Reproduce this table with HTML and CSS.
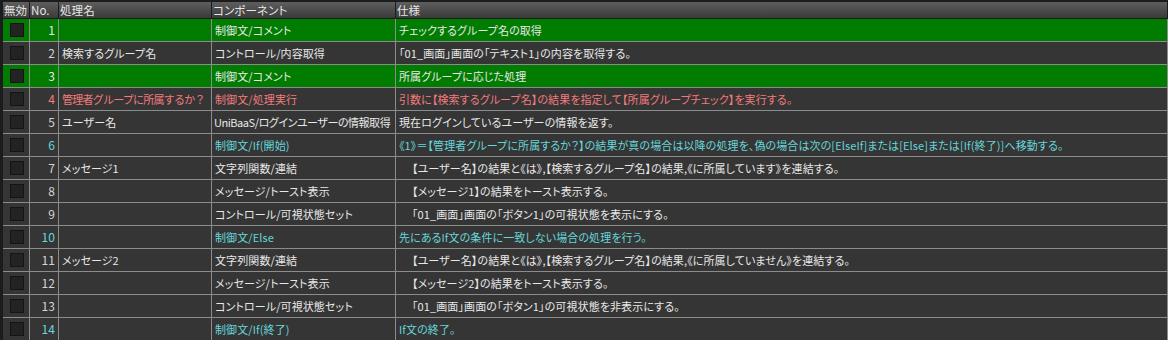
FILE: index.html
```html
<!DOCTYPE html>
<html lang="ja">
<head>
<meta charset="utf-8">
<link rel="stylesheet" href="styles.css">
</head>
<body>
<div class="grid">
  <div class="head">
    <div class="hc">無効</div><div class="hc">No.</div><div class="hc">処理名</div><div class="hc">コンポーネント</div><div class="hc">仕様</div>
  </div>
  <div class="rows">
    <div class="row green"><div class="c chk"><span class="box"></span></div><div class="c no">1</div><div class="c"></div><div class="c">制御文/コメント</div><div class="c">チェックするグループ名の取得</div></div>
    <div class="row"><div class="c chk"><span class="box"></span></div><div class="c no">2</div><div class="c">検索するグループ名</div><div class="c">コントロール/内容取得</div><div class="c">「01_画面」画面の「テキスト1」の内容を取得する。</div></div>
    <div class="row green"><div class="c chk"><span class="box"></span></div><div class="c no">3</div><div class="c"></div><div class="c">制御文/コメント</div><div class="c">所属グループに応じた処理</div></div>
    <div class="row red"><div class="c chk"><span class="box"></span></div><div class="c no">4</div><div class="c wide">管理者グループに所属するか？</div><div class="c">制御文/処理実行</div><div class="c">引数に【検索するグループ名】の結果を指定して【所属グループチェック】を実行する。</div></div>
    <div class="row"><div class="c chk"><span class="box"></span></div><div class="c no">5</div><div class="c">ユーザー名</div><div class="c tight">UniBaaS/ログインユーザーの情報取得</div><div class="c">現在ログインしているユーザーの情報を返す。</div></div>
    <div class="row cyan"><div class="c chk"><span class="box"></span></div><div class="c no">6</div><div class="c"></div><div class="c">制御文/If(開始)</div><div class="c">《1》＝【管理者グループに所属するか？】の結果が真の場合は以降の処理を、偽の場合は次の[ElseIf]または[Else]または[If(終了)]へ移動する。</div></div>
    <div class="row"><div class="c chk"><span class="box"></span></div><div class="c no">7</div><div class="c">メッセージ1</div><div class="c">文字列関数/連結</div><div class="c ind">【ユーザー名】の結果と《は》,【検索するグループ名】の結果,《に所属しています》を連結する。</div></div>
    <div class="row"><div class="c chk"><span class="box"></span></div><div class="c no">8</div><div class="c"></div><div class="c">メッセージ/トースト表示</div><div class="c ind">【メッセージ1】の結果をトースト表示する。</div></div>
    <div class="row"><div class="c chk"><span class="box"></span></div><div class="c no">9</div><div class="c"></div><div class="c">コントロール/可視状態セット</div><div class="c ind">「01_画面」画面の「ボタン1」の可視状態を表示にする。</div></div>
    <div class="row cyan"><div class="c chk"><span class="box"></span></div><div class="c no">10</div><div class="c"></div><div class="c">制御文/Else</div><div class="c">先にあるIf文の条件に一致しない場合の処理を行う。</div></div>
    <div class="row"><div class="c chk"><span class="box"></span></div><div class="c no">11</div><div class="c">メッセージ2</div><div class="c">文字列関数/連結</div><div class="c ind">【ユーザー名】の結果と《は》,【検索するグループ名】の結果,《に所属していません》を連結する。</div></div>
    <div class="row"><div class="c chk"><span class="box"></span></div><div class="c no">12</div><div class="c"></div><div class="c">メッセージ/トースト表示</div><div class="c ind">【メッセージ2】の結果をトースト表示する。</div></div>
    <div class="row"><div class="c chk"><span class="box"></span></div><div class="c no">13</div><div class="c"></div><div class="c">コントロール/可視状態セット</div><div class="c ind">「01_画面」画面の「ボタン1」の可視状態を非表示にする。</div></div>
    <div class="row cyan"><div class="c chk"><span class="box"></span></div><div class="c no">14</div><div class="c"></div><div class="c">制御文/If(終了)</div><div class="c">If文の終了。</div></div>
  </div>
</div>
</body>
</html>
```
FILE: styles.css
```css
html, body {
  margin: 0;
  padding: 0;
  background: #1c1c1c;
  overflow: hidden;
}
body {
  font-family: "Noto Sans CJK JP", "Noto Sans", sans-serif;
  font-size: 11px;
  letter-spacing: 0.1px;
  font-feature-settings: "palt";
  color: #e8e8e8;
}
.grid {
  width: 1165px;
  margin-left: 3px;
  padding-top: 2px;
}
.head {
  display: grid;
  grid-template-columns: 26px 28px 152px 183px 1fr;
  column-gap: 1px;
  background: #1c1c1c;
  padding-bottom: 1px;
  padding-right: 1px;
}
.hc {
  height: 16px;
  line-height: 16px;
  font-size: 11.5px;
  background: linear-gradient(#5e5e5e, #3a3a3a);
  color: #e6e6e6;
  padding-left: 1px;
  white-space: nowrap;
  overflow: hidden;
}
.rows {
  display: grid;
  row-gap: 1px;
  background: #8c8c8c;
  padding-right: 1px;
  padding-bottom: 1px;
}
.row {
  display: grid;
  grid-template-columns: 26px 28px 152px 183px 1fr;
  column-gap: 1px;
}
.c {
  height: 22px;
  line-height: 22px;
  background: #353535;
  padding-left: 3px;
  white-space: nowrap;
  overflow: hidden;
}
.green .c { background: #007c00; }
.red .c { color: #f27b7b; }
.cyan .c { color: #66d6da; }
.c.no {
  text-align: right;
  padding-left: 0;
  padding-right: 3px;
  font-size: 12px;
  color: #d4d4d4;
}
.green .c.no { color: #e8e8e8; }
.red .c.no { color: #f27b7b; }
.cyan .c.no { color: #66d6da; }
.c.chk {
  padding-left: 0;
  display: flex;
  align-items: center;
  justify-content: center;
}
.box {
  width: 12px;
  height: 12px;
  background: #232323;
  border: 1px solid #141414;
  margin-left: 1px;
}
.c.ind { padding-left: 16px; }
.c.tight { letter-spacing: -0.45px; padding-left: 2px; }
.c.wide { font-feature-settings: normal; letter-spacing: -0.75px; }
```
